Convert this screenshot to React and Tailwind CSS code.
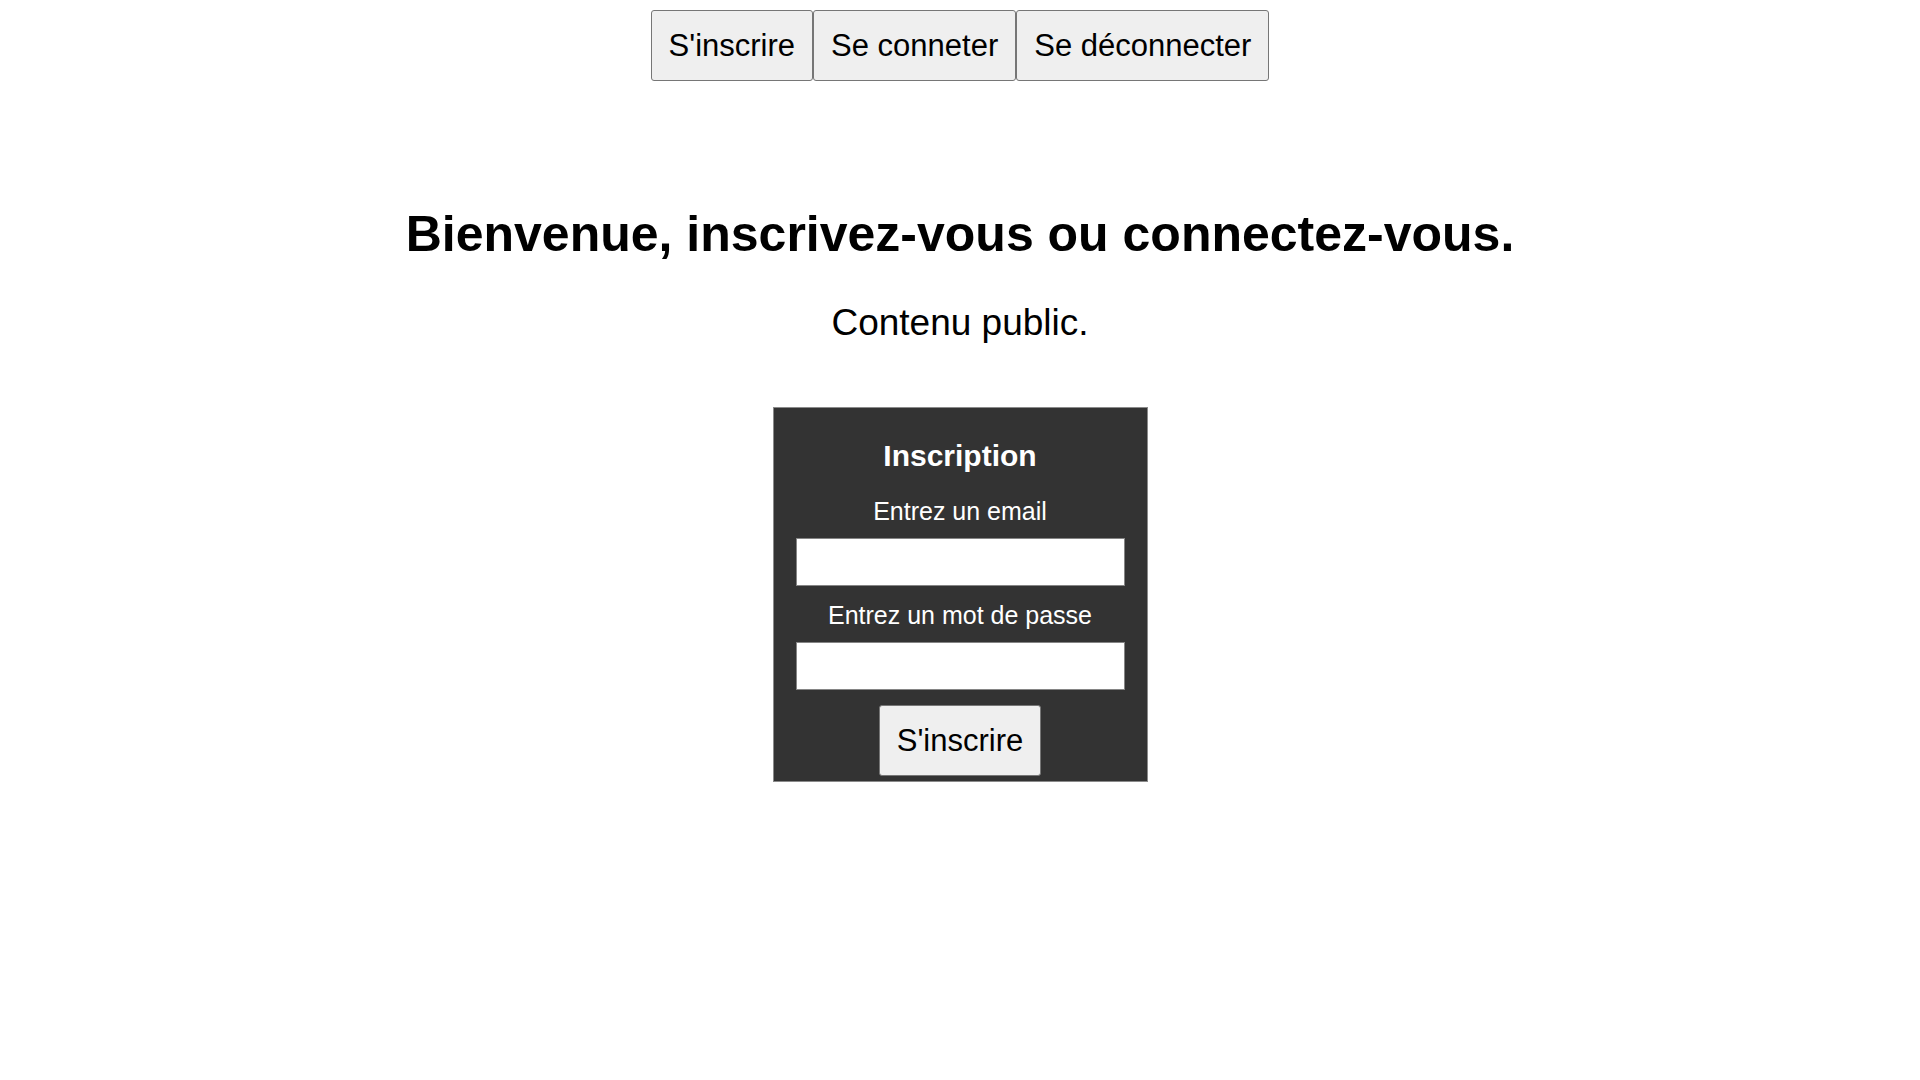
export default function App() {
  const btn =
    "bg-[#efefef] border border-[#767676] rounded-[3px] px-[17px] py-[16.5px] text-[31px] leading-[36px] text-black";
  return (
    <div
      className="min-h-screen bg-white flex flex-col items-center text-black"
      style={{ fontFamily: '"Liberation Sans", Arial, sans-serif' }}
    >
      <nav className="mt-[10px] flex">
        <button className={btn}>S'inscrire</button>
        <button className={btn}>Se conneter</button>
        <button className={btn}>Se déconnecter</button>
      </nav>
      <h1 className="mt-[125px] text-[50px] leading-[57px] font-bold">
        Bienvenue, inscrivez-vous ou connectez-vous.
      </h1>
      <p className="mt-[39px] text-[37px] leading-[42px]">Contenu public.</p>
      <form
        className="mt-[63px] w-[375px] bg-[#333333] border border-[#8a8a8a] px-[22px] pt-[30px] pb-[5px] flex flex-col items-center text-white"
        onSubmit={(e) => e.preventDefault()}
      >
        <h2 className="text-[30px] leading-[35px] font-bold">Inscription</h2>
        <label className="mt-[24px] text-[25px] leading-[29px]">Entrez un email</label>
        <input
          type="email"
          className="mt-[12px] w-full h-[48px] bg-white border border-[#858585] text-black"
        />
        <label className="mt-[14.5px] text-[25px] leading-[29px]">Entrez un mot de passe</label>
        <input
          type="password"
          className="mt-[12.5px] w-full h-[48px] bg-white border border-[#858585] text-black"
        />
        <button type="submit" className={"mt-[15px] " + btn}>
          S'inscrire
        </button>
      </form>
    </div>
  );
}
